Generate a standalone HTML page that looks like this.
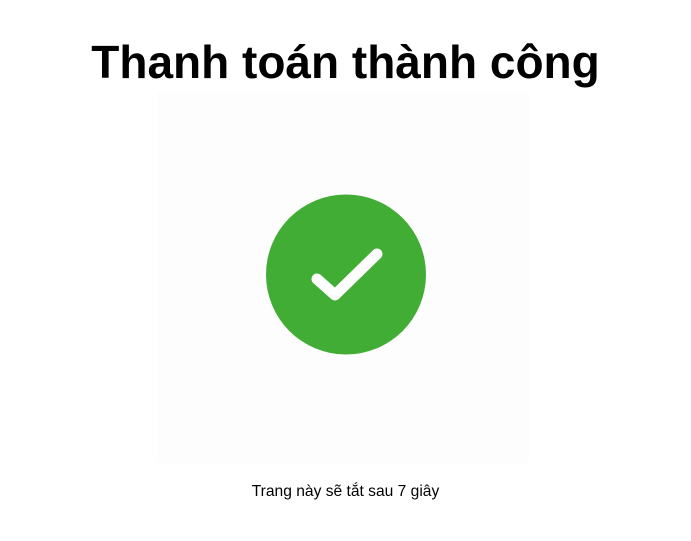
<!DOCTYPE html>
<html><head><meta charset="utf-8"><style>
html,body{margin:0;background:#fff;width:691px;height:541px;overflow:hidden;font-family:"Liberation Sans","DejaVu Sans",sans-serif}
h1{position:absolute;left:0;width:691px;top:35px;margin:0;text-align:center;font-size:46px;font-weight:bold;color:#000;line-height:54px}
.img{position:absolute;left:157px;top:92px;width:372px;height:371px;background:#fefdfe}
p{position:absolute;left:0;width:691px;top:483px;margin:0;text-align:center;font-size:15.6px;color:#000}
</style></head><body>
<h1>Thanh toán thành công</h1>
<div class="img"></div>
<svg style="position:absolute;left:0;top:0" width="691" height="541">
<circle cx="346" cy="274.5" r="80" fill="#41ad35"/>
<path d="M317 279 L335 295 L377 254" fill="none" stroke="#fff" stroke-width="11" stroke-linecap="round" stroke-linejoin="round"/>
</svg>
<p>Trang này sẽ tắt sau 7 giây</p>
</body></html>
